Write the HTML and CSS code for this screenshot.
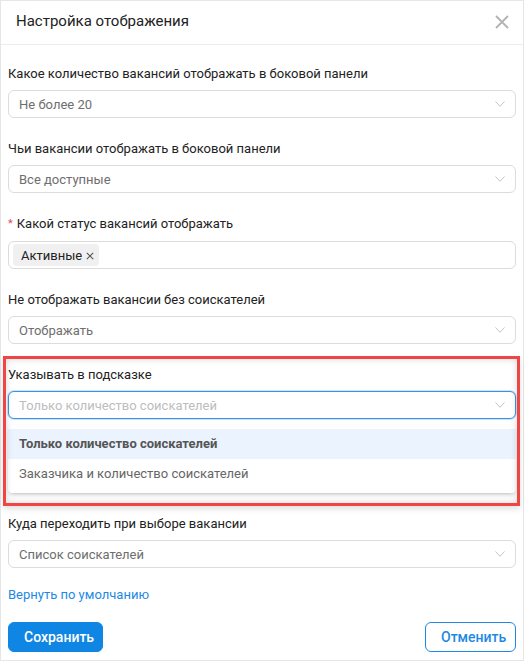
FILE: index.html
```html
<!DOCTYPE html>
<html lang="ru">
<head>
<meta charset="utf-8">
<title>Настройка отображения</title>
<link rel="stylesheet" href="styles.css">
</head>
<body>
<div class="modal">
  <header class="modal-head">
    <h1 class="modal-title">Настройка отображения</h1>
    <button class="close" aria-label="Закрыть">
      <svg width="14" height="14" viewBox="0 0 14 14"><path d="M1 1L13 13M13 1L1 13" stroke="#b3b3b3" stroke-width="1.8" fill="none"/></svg>
    </button>
  </header>
  <div class="modal-body">
    <div class="fields">
      <div class="field">
        <label class="label">Какое количество вакансий отображать в боковой панели</label>
        <div class="select"><span class="value">Не более 20</span><svg class="chev" width="10" height="6" viewBox="0 0 10 6"><path d="M0.5 0.5L5 5.3L9.5 0.5" stroke="#c4c4c4" stroke-width="1" fill="none"/></svg></div>
      </div>
      <div class="field">
        <label class="label">Чьи вакансии отображать в боковой панели</label>
        <div class="select"><span class="value">Все доступные</span><svg class="chev" width="10" height="6" viewBox="0 0 10 6"><path d="M0.5 0.5L5 5.3L9.5 0.5" stroke="#c4c4c4" stroke-width="1" fill="none"/></svg></div>
      </div>
      <div class="field">
        <label class="label"><span class="req">*</span>Какой статус вакансий отображать</label>
        <div class="select select-tags"><span class="tag">Активные<svg class="tag-x" width="8" height="8" viewBox="0 0 8 8"><path d="M0.8 0.8L7.2 7.2M7.2 0.8L0.8 7.2" stroke="#555" stroke-width="1.1" fill="none"/></svg></span></div>
      </div>
      <div class="field">
        <label class="label">Не отображать вакансии без соискателей</label>
        <div class="select"><span class="value">Отображать</span><svg class="chev" width="10" height="6" viewBox="0 0 10 6"><path d="M0.5 0.5L5 5.3L9.5 0.5" stroke="#c4c4c4" stroke-width="1" fill="none"/></svg></div>
      </div>
      <div class="field field-marked">
        <label class="label">Указывать в подсказке</label>
        <div class="select select-open"><span class="value placeholder">Только количество соискателей</span><svg class="chev" width="10" height="6" viewBox="0 0 10 6"><path d="M0.5 0.5L5 5.3L9.5 0.5" stroke="#c4c4c4" stroke-width="1" fill="none"/></svg></div>
        <ul class="dropdown">
          <li class="option option-active">Только количество соискателей</li>
          <li class="option">Заказчика и количество соискателей</li>
        </ul>
      </div>
      <div class="field">
        <label class="label">Куда переходить при выборе вакансии</label>
        <div class="select"><span class="value">Список соискателей</span><svg class="chev" width="10" height="6" viewBox="0 0 10 6"><path d="M0.5 0.5L5 5.3L9.5 0.5" stroke="#c4c4c4" stroke-width="1" fill="none"/></svg></div>
      </div>
    </div>
    <a class="reset" href="#">Вернуть по умолчанию</a>
    <div class="actions">
      <button class="btn btn-primary">Сохранить</button>
      <button class="btn btn-outline">Отменить</button>
    </div>
  </div>
</div>
</body>
</html>
```
FILE: styles.css
```css
* { box-sizing: border-box; }
body {
  margin: 0;
  background: #fff;
  font-family: Roboto, "Liberation Sans", Arial, sans-serif;
  color: #222;
}
.modal {
  width: 524px;
  height: 661px;
  border: 1px solid #e6e6e6;
  background: #fff;
}
.modal-head {
  height: 44px;
  border-bottom: 1px solid #ececec;
  display: flex;
  align-items: center;
  justify-content: space-between;
  padding: 0 14px 3px 15px;
}
.modal-title {
  margin: 0;
  font-size: 15px;
  font-weight: 400;
  color: #222;
  line-height: 20px;
}
.close {
  border: 0;
  background: none;
  padding: 0;
  width: 14px;
  height: 14px;
  display: flex;
  margin-top: 1px;
}
.modal-body {
  padding: 19px 7px 0;
}
.fields {
  display: flex;
  flex-direction: column;
  gap: 21px;
}
.field {
  display: flex;
  flex-direction: column;
  gap: 6px;
}
.label {
  font-size: 13px;
  line-height: 20px;
  color: #222;
}
.req {
  color: #f0484a;
  font-size: 11px;
  margin-right: 4px;
  position: relative;
  top: -1px;
}
.select {
  height: 28px;
  border: 1px solid #dcdcdc;
  border-radius: 6px;
  display: flex;
  align-items: center;
  justify-content: space-between;
  padding: 0 10px;
  background: #fff;
}
.value {
  font-size: 13px;
  color: #6e6e6e;
}
.placeholder { color: #bdbdbd; }
.select-tags { padding: 0 4px; }
.tag {
  height: 22px;
  display: inline-flex;
  align-items: center;
  gap: 4px;
  padding: 0 5px 0 8px;
  background: #f0f0f0;
  border-radius: 4px;
  font-size: 13px;
  color: #222;
}
.tag-x { margin-top: 1px; }
.select-open {
  border-color: #3795e5;
  box-shadow: 0 0 0 1px rgba(55, 149, 229, 0.25);
}
.field-marked {
  position: relative;
}
.field-marked::after {
  content: "";
  position: absolute;
  left: -5px;
  right: -4px;
  top: -9px;
  bottom: -13px;
  border: 3px solid #f04545;
  box-shadow: inset 0 0 7px rgba(0, 0, 0, 0.16), 0 3px 6px rgba(0, 0, 0, 0.12);
  pointer-events: none;
}
.dropdown {
  list-style: none;
  margin: 0;
  padding: 4px 0;
  background: #fff;
  border-radius: 4px;
  box-shadow: 0 3px 5px -2px rgba(0, 0, 0, 0.28), 0 0 2px rgba(0, 0, 0, 0.06);
}
.option {
  height: 30px;
  line-height: 30px;
  padding: 0 11px;
  font-size: 13px;
  color: #666;
}
.option-active {
  background: #ebf4fe;
  font-weight: 700;
  color: #555;
}
.reset {
  display: block;
  width: max-content;
  margin-top: 17px;
  font-size: 13px;
  line-height: 20px;
  color: #1d89e4;
  text-decoration: none;
}
.actions {
  margin-top: 17px;
  display: flex;
  justify-content: space-between;
}
.btn {
  height: 30px;
  border-radius: 6px;
  font-family: inherit;
  font-size: 14px;
  font-weight: 500;
  padding: 0 15px;
  cursor: pointer;
}
.btn-primary {
  background: #0f86e3;
  border: 1px solid #0f86e3;
  color: #fff;
  width: 95px;
}
.btn-outline {
  background: #fff;
  border: 1px solid #1d89e4;
  color: #1d89e4;
  width: 91px;
}
```
